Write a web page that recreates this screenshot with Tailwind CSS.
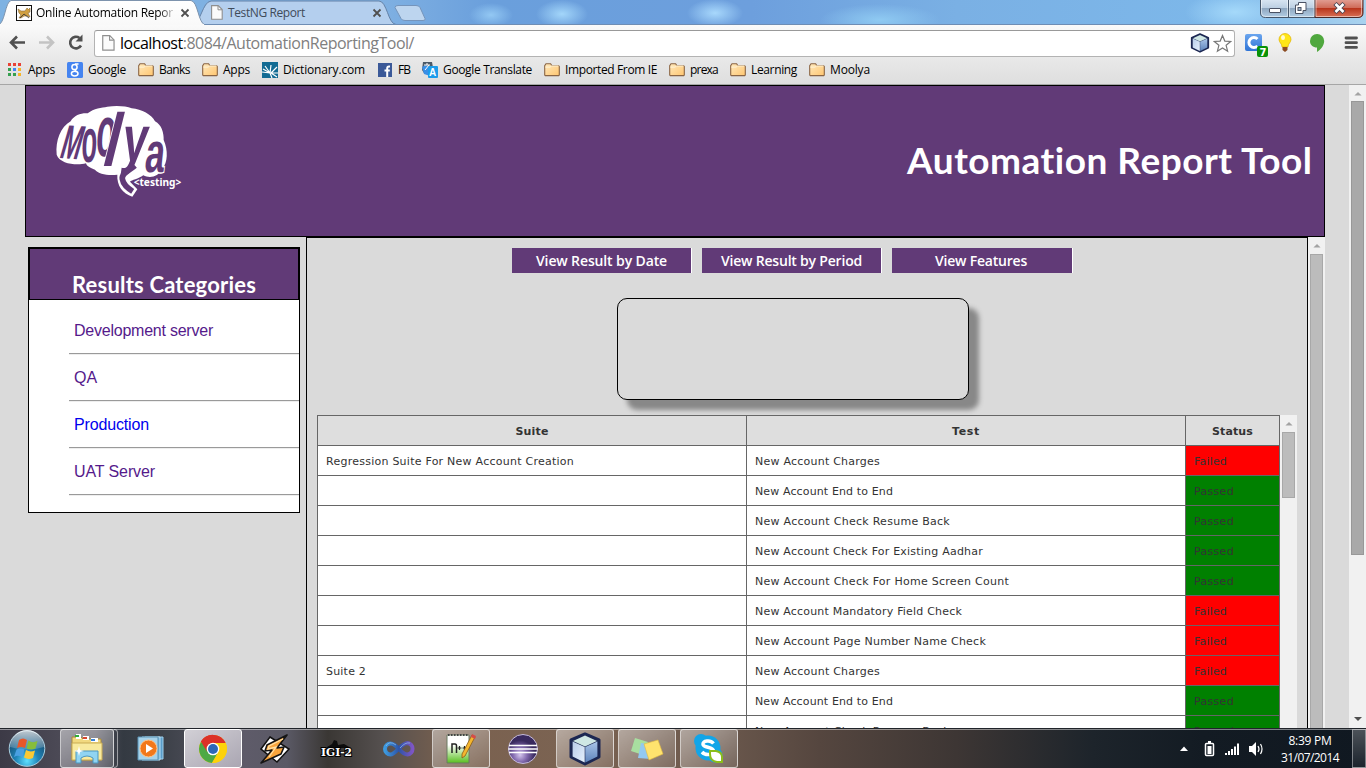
<!DOCTYPE html>
<html lang="en">
<head>
<meta charset="utf-8">
<title>Online Automation Report</title>
<script src="https://cdn.jsdelivr.net/npm/@tailwindcss/browser@4"></script>
</head>
<body class="w-[1366px] h-[768px] overflow-hidden flex flex-col bg-[#dadada] font-['Open_Sans',sans-serif] text-black">

<!-- shared symbols -->
<svg width="0" height="0" class="absolute">
  <defs>
    <linearGradient id="fold" x1="0" y1="0" x2="1" y2="1"><stop offset="0" stop-color="#ffe9bd"/><stop offset="1" stop-color="#ffc670"/></linearGradient>
    <linearGradient id="cubeL" x1="0" y1="0" x2="1" y2="1"><stop offset="0" stop-color="#b9cdea"/><stop offset="1" stop-color="#e6f0fc"/></linearGradient>
    <linearGradient id="cubeR" x1="0" y1="0" x2="0" y2="1"><stop offset="0" stop-color="#a9c4e8"/><stop offset="1" stop-color="#5f85bd"/></linearGradient>
    <symbol id="folder" viewBox="0 0 16 16"><path d="M.7 13V3.6L2 1.7h4.6l1.2 1.8h6.6l.9 1V13l-.6.6H1.3z" fill="url(#fold)" stroke="#8a6544" stroke-width="1.1"/><path d="M1.3 5.1h4.8l1.5-1.2h7" fill="none" stroke="#fff4d8" stroke-width="1"/></symbol>
    <symbol id="page" viewBox="0 0 12 15"><path d="M.6.6h6.6l4 4v9.6H.6z" fill="#fbfbfb" stroke="#8f8f8f" stroke-width="1.1"/><path d="M7 .8v4h4" fill="none" stroke="#8f8f8f"/></symbol>
    <symbol id="cube" viewBox="0 0 32 34"><path d="M16 2 30 8V25L16 32 2 25V8z" fill="#1c2752" stroke="#1c2752" stroke-width="3" stroke-linejoin="round"/><path d="M16 3.5 28 9 16 14.500 4 9z" fill="#cfe7e4"/><path d="M3.600 9.500 15.700 15V30.500L3.600 24.500z" fill="url(#cubeL)"/><path d="M28.400 9.500 16.300 15V30.500L28.400 24.500z" fill="url(#cubeR)"/></symbol>
    <symbol id="up" viewBox="0 0 9 5"><path d="M0 4.500 4.500 0 9 4.500z" fill="#a3a3a3"/></symbol>
  </defs>
</svg>

<!-- tab strip -->
<div class="relative h-[25px] shrink-0 bg-[radial-gradient(ellipse_22px_12px_at_491px_15px,#93c8f3,transparent),radial-gradient(ellipse_26px_14px_at_562px_14px,#a3d6fa,transparent),radial-gradient(ellipse_28px_14px_at_715px_13px,#a8d8fc,transparent),radial-gradient(ellipse_60px_16px_at_880px_20px,#8fcaf2,transparent),radial-gradient(ellipse_50px_20px_at_1235px_12px,#a5d9fa,transparent),linear-gradient(90deg,#7eb2e2,#7fb0e2_28%,#6a9fdc_36%,#6d9fdd_55%,#7ab0e4_70%,#7db8ea_90%,#a9d2ee)]">
  <svg class="absolute inset-0" width="1366" height="25">
    <defs><linearGradient id="t1" x1="0" y1="0" x2="0" y2="1"><stop offset="0" stop-color="#fff"/><stop offset="1" stop-color="#f9f9f9"/></linearGradient></defs>
    <path d="M192 24.500C201 24 202 2 211 1h168c8 0 9 23 17 23.500z" fill="#b4cfee" stroke="#6482a8"/>
    <path d="M395 7.500Q395 5.500 398 5.500h18q3 0 4 2l5 11q1 2-2 2h-18q-3 0-4-2z" fill="#bdd5ef" stroke="#7594bb"/>
    <path d="M0 24.500H1366" stroke="#6e8db4"/>
    <path d="M-2 25C5 24 5 2 11 .5h180c7 1 7 22 14 24.500z" fill="url(#t1)" stroke="#7d93ad"/>
    <path d="M0 24.500h204" stroke="#f9f9f9"/>
    <g stroke="#4f4f4f" stroke-width="1.8"><path d="M181.500 9.500l7 7m0-7l-7 7M373.500 9.500l7 7m0-7l-7 7"/></g>
    <rect x="16.500" y="5.500" width="15" height="15" fill="#fff" stroke="#111"/>
    <path d="M18 9l3 2 4 0 2-3 1.500 1.500L30 8v4l-2 1 2 4-3-1-3 0-3 2h-2l2-3-2-2z" fill="#d1a041" stroke="#8a6a35" stroke-width=".6"/><path d="M20 18l4-4 5 4" fill="none" stroke="#333" stroke-width=".8"/>
  </svg>
  <div class="relative flex items-center h-[25px] pl-9 text-[12px] leading-[25px]">
    <span data-w="137" class="bg-gradient-to-r from-black from-90% to-black/20 bg-clip-text text-transparent">Online Automation Repor</span>
    <svg class="ml-[38px] mr-[5px]" width="12" height="15"><use href="#page"/></svg>
    <span data-w="77" class="text-[#3f4b5a]">TestNG Report</span>
  </div>
  <svg class="absolute left-[1260px] top-0" width="104" height="19">
    <defs><linearGradient id="wb" x1="0" y1="0" x2="0" y2="1"><stop offset="0" stop-color="#dbe7f3"/><stop offset=".48" stop-color="#bccfe2"/><stop offset=".5" stop-color="#8ea6bf"/><stop offset="1" stop-color="#b4cfe6"/></linearGradient>
    <linearGradient id="wr" x1="0" y1="0" x2="0" y2="1"><stop offset="0" stop-color="#e3a297"/><stop offset=".48" stop-color="#cf6b58"/><stop offset=".5" stop-color="#b8341b"/><stop offset="1" stop-color="#d97358"/></linearGradient></defs>
    <path d="M.5-1V13q0 4.500 5 4.500h49.500V-1z" fill="url(#wb)" stroke="#46566a"/><path d="M55-1v18.500h43q5 0 5-4.500V-1z" fill="url(#wr)" stroke="#4a2a2a"/><path d="M28.500 0v17" stroke="#46566a"/>
    <path d="M1.500 0v13q0 3.500 4 3.500h22V0m2 0v16.500h24.500V0m2 0v16.500h41q4.500 0 4.500-3.500V0" fill="none" stroke="#fff" stroke-opacity=".5"/>
    <rect x="9.500" y="8.500" width="11" height="4" rx=".5" fill="#fff" stroke="#4a5264"/>
    <path d="M38.500 2.500h7.500v8h-3v3h-7.500v-8.500h3z" fill="#fff" stroke="#4a5264"/><rect x="38" y="7.500" width="3" height="3" fill="#a0b5ca" stroke="#4a5264"/>
    <path d="M75 3.500l9 9m0-9l-9 9" stroke="#4a4350" stroke-width="4.500"/><path d="M75.500 4l8 8m0-8l-8 8" stroke="#fff" stroke-width="2.600"/>
  </svg>
</div>

<!-- toolbar -->
<div class="h-8 shrink-0 flex items-center bg-gradient-to-b from-[#fafafa] to-[#e9e9e9]">
  <svg class="ml-[9px]" width="82" height="32" fill="none">
    <path d="M16 17.500H3M8 11.500l-6 6 6 6" stroke="#505050" stroke-width="2.600"/>
    <path d="M30 17.500h13M38 11.500l6 6-6 6" stroke="#c3c3c3" stroke-width="2.600"/>
    <path d="M72 20.500A5.800 5.800 0 1 1 70.500 13" stroke="#505050" stroke-width="2.600"/><path d="M73.500 9.500v7h-7z" fill="#505050"/>
  </svg>
  <div class="ml-[3px] mt-1 w-[1141px] h-[27px] rounded-[3px] border border-[#b3b3b3] border-t-[#999] bg-white flex items-center pl-[7px] text-[16px]">
    <svg width="13" height="16"><use href="#page"/></svg>
    <span class="ml-[5px] -mt-px leading-6 text-[#808080]" data-w="294"><span class="text-black">localhost</span>:8084/AutomationReportingTool/</span>
    <svg class="ml-auto" width="20" height="20"><use href="#cube"/></svg>
    <svg class="ml-[3px] mr-[2px]" width="19" height="19" viewBox="0 0 19 19"><path d="M9.500 1.500l2.300 5.600 5.900.4-4.600 3.800 1.500 5.900-5.100-3.300-5.100 3.300 1.500-5.900L1.300 7.500l5.900-.4z" fill="#fff" stroke="#777" stroke-width="1.200"/></svg>
  </div>
  <svg class="ml-2" width="120" height="32">
    <defs><linearGradient id="cc" x1="0" y1="0" x2="0" y2="1"><stop offset="0" stop-color="#6aa5ee"/><stop offset="1" stop-color="#2f74d6"/></linearGradient></defs>
    <rect x="2" y="9" width="17" height="17" rx="2" fill="url(#cc)"/><path d="M14.500 14a5 5 0 1 0 0 7" fill="none" stroke="#fff" stroke-width="3"/>
    <rect x="14" y="21" width="11" height="11" rx="2" fill="#089208"/><text x="16.500" y="30.500" font-size="10" font-weight="700" font-family="DejaVu Sans" fill="#fff">7</text>
    <path d="M42 8.500a6 6 0 0 0-6 6c0 3 3 4 3 7.500h6c0-3.500 3-4.500 3-7.500a6 6 0 0 0-6-6z" fill="#ffe617" stroke="#e0b000" stroke-width=".7"/><path d="M39.500 22h5v3l-2.500 2-2.500-2z" fill="#8b4b22"/><ellipse cx="40" cy="12.500" rx="2" ry="2.500" fill="#fff" opacity=".8"/>
    <path d="M74 9a7 7 0 0 0-7 7c0 4 3 6.500 7 6.500V27c3-2 7.200-6 7.200-11A7 7 0 0 0 74 9z" fill="#50a83f"/>
    <g stroke="#505050" stroke-width="2.800" stroke-linecap="round"><path d="M103 13h10.500M103 17.700h10.500M103 22.400h10.500"/></g>
  </svg>
</div>

<!-- bookmarks bar -->
<div class="h-7 shrink-0 flex items-center gap-3 pl-2 pb-[2px] border-b border-[#a6a6a6] bg-gradient-to-b from-[#e9e9e9] to-[#dedede] text-[12px] leading-6">
  <div class="flex items-center gap-[5px]"><svg width="15" height="14"><g fill="#e94235"><path d="M0 0h3v3H0zM5 0h3v3H5zM10 0h3v3h-3z"/></g><path d="M0 5h3v3H0z" fill="#35a04f"/><path d="M5 5h3v3H5z" fill="#4285f4"/><path d="M10 5h3v3h-3zM10 10h3v3h-3z" fill="#f7b529"/><path d="M0 10h3v3H0zM5 10h3v3H5z" fill="#35a04f"/></svg><span data-w="27">Apps</span></div>
  <div class="flex items-center gap-[5px]"><svg width="16" height="16"><rect width="16" height="16" rx="1.500" fill="#4584f0"/><g fill="none" stroke="#fff" stroke-width="1.500"><circle cx="7.500" cy="5" r="2.600"/><path d="M11.500 2H8M8.500 7.500q-1 1 .8 2"/><ellipse cx="7.700" cy="11.600" rx="3.300" ry="2.400"/></g></svg><span data-w="38">Google</span></div>
  <div class="flex items-center gap-[5px]"><svg width="16" height="16"><use href="#folder"/></svg><span data-w="31">Banks</span></div>
  <div class="flex items-center gap-[5px]"><svg width="16" height="16"><use href="#folder"/></svg><span data-w="27">Apps</span></div>
  <div class="flex items-center gap-[5px]"><svg width="16" height="16"><path d="M0 0h16v16H0z" fill="#126b93"/><path d="M0 10l8 1 2 5M8 11L3 4m5 7l1-8m0 8l6-6m-6 6h7m-7 0l6 4M1 7l7 4" fill="none" stroke="#fff" stroke-width="1.200"/></svg><span data-w="82">Dictionary.com</span></div>
  <div class="flex items-center gap-[5px]"><svg width="16" height="16"><path d="M1 1h14v14H1z" fill="#3b5998"/><path d="M13 4.500h-1q-1.800 0-1.800 2V15M7.500 8.500h5.300" fill="none" stroke="#fff" stroke-width="2"/></svg><span data-w="12">FB</span></div>
  <div class="flex items-center gap-[5px]"><svg width="16" height="16"><path d="M1 0h9l2 11H2L0 8z" fill="#4c5a68"/><path d="M0 5l4-2 4 3v8L2 12z" fill="#3a8fe6"/><rect x="6" y="4" width="10" height="12" rx="1" fill="#1c9ceb"/><path d="M2 3h6M5 1v2M3 8l4-5" stroke="#fff" fill="none"/><text x="7" y="14" font-size="10" font-weight="700" font-family="Liberation Sans" fill="#fff">A</text></svg><span data-w="89">Google Translate</span></div>
  <div class="flex items-center gap-[5px]"><svg width="16" height="16"><use href="#folder"/></svg><span data-w="92">Imported From IE</span></div>
  <div class="flex items-center gap-[5px]"><svg width="16" height="16"><use href="#folder"/></svg><span data-w="28">prexa</span></div>
  <div class="flex items-center gap-[5px]"><svg width="16" height="16"><use href="#folder"/></svg><span data-w="46">Learning</span></div>
  <div class="flex items-center gap-[5px]"><svg width="16" height="16"><use href="#folder"/></svg><span data-w="40">Moolya</span></div>
</div>

<!-- page viewport -->
<div class="flex h-[643px] shrink-0 overflow-hidden">
  <div class="ml-[25px] w-[1300px] flex flex-col">
    <header class="h-[152px] shrink-0 border border-black bg-[#613a77] flex items-center justify-between text-white">
      <svg class="ml-[27px] -mt-[20px] overflow-visible" width="131" height="94" viewBox="99 60 393 282" font-family="Liberation Sans" font-weight="700" font-size="100">
        <path d="M110 212C106 170 122 128 152 112C162 92 188 86 203 88C222 72 245 72 262 68C290 64 318 66 335 73C365 75 395 92 405 112C425 122 432 148 431 168C445 200 443 235 427 255C415 278 390 284 370 274C355 285 335 288 330 293L352 316L337 338C308 328 290 305 292 272C265 276 235 270 225 257C210 252 200 246 198 238C170 245 120 240 110 212Z" fill="#fff"/>
        <g fill="#613a77">
          <text transform="translate(115 222) rotate(4) skewX(-12) scale(.72 1.45)">M</text>
          <text transform="translate(182 233) skewX(-3) scale(.76 1.860)">o</text>
          <text transform="translate(224 216) skewX(-5) scale(.96 2.150)">o</text>
          <text transform="translate(240 246) skewX(-14) scale(1.650 2.250)" stroke="#fff" stroke-width="3" paint-order="stroke">l</text>
          <text transform="translate(301 230) skewX(-8) scale(1.350 1.950)" stroke="#fff" stroke-width="5" paint-order="stroke">y</text>
          <text transform="translate(371 264) skewX(-6) scale(1.050 1.700)" stroke="#fff" stroke-width="5" paint-order="stroke">a</text>
          <path d="M345 245C325 262 304 268 307 285C310 303 322 312 338 322" fill="none" stroke="#613a77" stroke-width="17"/>
        </g>
        <text x="341" y="306" font-size="29" textLength="143" lengthAdjust="spacingAndGlyphs" font-family="Noto Sans" fill="#fff">&lt;testing&gt;</text>
      </svg>
      <h1 class="mr-[11px] -mt-[2px] text-[37px] leading-[46px] font-bold font-['Lato',sans-serif]" data-w="406">Automation Report Tool</h1>
    </header>
    <div class="flex h-[491px]">
      <aside class="ml-[3px] mt-[10px] w-[272px] h-[266px] border border-black bg-white">
        <div class="h-[52px] border border-black bg-[#613a77] text-white flex justify-center items-end">
          <h2 class="text-[22px] leading-[28px] font-bold font-['Lato',sans-serif]" data-w="184">Results Categories</h2>
        </div>
        <nav class="pl-10 pt-2 font-['Liberation_Sans',sans-serif] text-base text-[#551a8b]">
          <div class="h-[47px] border-b border-[#eee]"><a class="h-[46px] flex items-center border-b border-[#9a9a9a] pl-[5px]"><span data-w="139">Development server</span></a></div>
          <div class="h-[47px] border-b border-[#eee]"><a class="h-[46px] flex items-center border-b border-[#9a9a9a] pl-[5px]"><span>QA</span></a></div>
          <div class="h-[47px] border-b border-[#eee]"><a class="h-[46px] flex items-center border-b border-[#9a9a9a] pl-[5px] text-[#0000ee]"><span data-w="75">Production</span></a></div>
          <div class="h-[47px] border-b border-[#eee]"><a class="h-[46px] flex items-center border-b border-[#9a9a9a] pl-[5px]"><span data-w="81">UAT Server</span></a></div>
        </nav>
      </aside>
      <main class="ml-[6px] w-[1002px] border border-b-0 border-black flex flex-col">
        <div class="mt-[10px] ml-[205px] flex gap-[10px] text-white text-[14px] font-semibold leading-[25px]">
          <div class="w-[180px] h-[25px] bg-[#613a77] border-r border-white flex justify-center"><span data-w="131">View Result by Date</span></div>
          <div class="w-[180px] h-[25px] bg-[#613a77] border-r border-white flex justify-center"><span data-w="141">View Result by Period</span></div>
          <div class="w-[181px] h-[25px] bg-[#613a77] border-r border-white flex justify-center pr-[2px]"><span data-w="92">View Features</span></div>
        </div>
        <div class="mt-[25px] ml-[310px] w-[352px] h-[102px] shrink-0 rounded-[10px] border border-black bg-[#dadada] shadow-[10px_10px_5px_#888]"></div>
        <div class="mt-[15px] ml-[10px] flex h-[313px] overflow-hidden">
          <div id="grid" class="w-[963px] border-l border-t border-[#666] font-['DejaVu_Sans',sans-serif] text-[11px] text-[#333]">
            <div class="grid grid-cols-[429px_439px_94px] h-[30px] font-bold leading-[26px] text-center bg-[#dedede]">
              <div class="pt-[3px] border-r border-b border-[#666]"><span data-w="33">Suite</span></div><div class="pt-[3px] border-r border-b border-[#666]"><span data-w="28">Test</span></div><div class="pt-[3px] border-r border-b border-[#666]"><span data-w="41">Status</span></div>
            </div>
          </div>
          <div class="w-[17px] bg-[#f1f1f1] flex flex-col items-center">
            <svg class="mt-[7px]" width="8" height="4"><use href="#up"/></svg>
            <div class="mt-[6px] w-[13px] h-[66px] bg-[#bcbcbc] border border-[#a8a8a8]"></div>
          </div>
        </div>
      </main>
      <div class="w-[17px] bg-[#f1f1f1] flex flex-col items-center">
        <svg class="mt-[7px] shrink-0" width="8" height="4"><use href="#up"/></svg>
        <div class="mt-[6px] w-[13px] h-[500px] shrink-0 bg-[#bcbcbc] border border-[#a8a8a8]"></div>
      </div>
    </div>
  </div>
  <div class="ml-6 w-[17px] bg-[#f1f1f1] flex flex-col items-center">
    <svg class="mt-[7px] shrink-0" width="8" height="4"><use href="#up"/></svg>
    <div class="mt-[5px] w-[13px] h-[454px] shrink-0 bg-[#a9a9a9] border border-[#989898]"></div>
    <svg class="mt-auto mb-[7px]" width="8" height="4"><path d="M0 0h8L4 4z" fill="#505050"/></svg>
  </div>
</div>

<!-- taskbar -->
<div class="h-10 shrink-0 flex border-t border-[#20242a] text-white bg-[linear-gradient(90deg,#3c3a46,#55535f_7%,#343a42_9%,#3d4149_12%,#5e5b69_18%,#5a5965_21%,#3a3734_24%,#55504f_28%,#7a614f_33%,#7b6352_42%,#6d5a4e_52%,#55463f_60%,#3d3634_70%,#1d242b_80%,#131b23_88%,#101821)] shadow-[inset_0_1px_0_rgba(255,255,255,.45)]">
  <svg class="ml-2 mr-[14px]" width="38" height="39" viewBox="0 0 38 39">
    <defs><radialGradient id="orb" cx=".5" cy=".85" r=".8"><stop offset="0" stop-color="#5fe0ff"/><stop offset=".4" stop-color="#1f84b8"/><stop offset="1" stop-color="#16405f"/></radialGradient><linearGradient id="gl" x1="0" y1="0" x2="0" y2="1"><stop offset="0" stop-color="#fff" stop-opacity=".75"/><stop offset="1" stop-color="#fff" stop-opacity=".15"/></linearGradient></defs>
    <circle cx="19" cy="19.500" r="17.800" fill="url(#orb)" stroke="#a9cfe0" stroke-width="1"/><path d="M2 18a17 17 0 0 1 34 0Q19 23 2 18z" fill="url(#gl)"/>
    <path d="M11 11q4-3 8 0l-2 8q-4-2-8 0z" fill="#e8572a"/><path d="M20.500 11.500q4 3 9 .5l-2 7.500q-4 2-9 0z" fill="#86bd3c"/><path d="M8.500 20.500q4-2 8 0l-2 8q-4-3-8.500-.5z" fill="#4aa0e2"/><path d="M18 21q4 2.500 9 .5l-2 7.500q-5 2-9-.5z" fill="#fbc934"/>
  </svg>
  <div class="flex gap-1">
    <div class="w-[58px] flex"><div class="w-[54px] flex items-center justify-center rounded-[3px] border border-white/60 bg-gradient-to-br from-white/50 to-white/15"><svg width="32" height="30" viewBox="0 0 32 30"><path d="M1 6V3h9l2 2h18v21H1z" fill="#f1d97f" stroke="#a8893c"/><path d="M5 0h5v5H5zM12 2h6v4h-6zM20 4h7v4h-7z" fill="#fff"/><path d="M4 1h4v2H4z" fill="#2fae37"/><path d="M12 3h4v2h-4z" fill="#d9472f"/><path d="M20 5h4v2h-4z" fill="#3b84d8"/><path d="M1 9h30v17H1z" fill="#f8ea9e" stroke="#c8ab55"/><path d="M5 29V17h22v12h-5v-5q-6-4-12 0v5z" fill="#90d4f2" stroke="#4a96c0"/><path d="M8 12l1 4 4 1-4 1-1 4-1-4-4-1 4-1z" fill="#fff"/></svg></div><div class="w-1 border-r border-y border-white/50 rounded-r"></div></div>
    <div class="w-[58px] flex items-center justify-center"><svg width="28" height="26" viewBox="0 0 28 26"><path d="M8 1h18v22H8z" fill="#5a9cc8" stroke="#9fd0ec"/><path d="M5 1h18v23H5z" fill="#71b2da" stroke="#b9def3"/><path d="M1 1h20v23H1z" fill="#a7d2ea" stroke="#5b93b5"/><circle cx="11.500" cy="12.500" r="8.500" fill="#f2781b" stroke="#ffc58a"/><path d="M9 8l7 4.500L9 17z" fill="#fff"/></svg></div>
    <div class="w-[58px] flex items-center justify-center rounded-[3px] border border-white bg-gradient-to-br from-[#d2d0d6] to-[#aaa6b2]"><svg width="30" height="30" viewBox="0 0 30 30"><circle cx="15" cy="15" r="14" fill="#fdd20a"/><path d="M15 15L3 7.500A14 14 0 0 1 27.500 9H15z" fill="#dc3127"/><path d="M2.900 8A14 14 0 0 0 14 29l6-10.500L15 15z" fill="#4da944"/><path d="M15 9h12.500A14 14 0 0 1 14 29l6-10z" fill="#fdd20a"/><path d="M2.900 7.500A14 14 0 0 1 27.500 9H15a6.500 6.500 0 0 0-5.800 9z" fill="#dc3127"/><circle cx="15" cy="15" r="6.300" fill="#fff"/><circle cx="15" cy="15" r="5" fill="#2c68b8"/></svg></div>
    <div class="w-[58px] flex items-center justify-center"><svg width="30" height="30" viewBox="0 0 30 30"><path d="M10 3l19 12-12 13L1 15z" fill="#fff" stroke="#111" stroke-width="1.500"/><path d="M27 1L7 11l-2 6 7-1L1 29l20-9 3-7-7 1z" fill="#f9a53c" stroke="#151515" stroke-width="1.600" stroke-linejoin="round"/><path d="M23 5L9 12l-1 3 8-2-7 10" fill="none" stroke="#ffe0a5" stroke-width="1.300"/></svg></div>
    <div class="w-[58px] flex items-center justify-center"><svg width="34" height="20" viewBox="0 0 34 20"><path d="M7 8l5-3 2-4 3 1 1 4 6-1 7 4H7z" fill="#0c0c0c"/><text x="1" y="17" font-size="11" font-weight="700" font-family="DejaVu Serif" textLength="31" lengthAdjust="spacingAndGlyphs" fill="#fff" stroke="#000" stroke-width="2" paint-order="stroke">IGI-2</text></svg></div>
    <div class="w-[58px] flex items-center justify-center"><svg width="32" height="20" viewBox="0 0 32 20"><defs><linearGradient id="vs"><stop offset="0" stop-color="#3d9ae0"/><stop offset=".5" stop-color="#2d55a8"/><stop offset="1" stop-color="#7d55c4"/></linearGradient></defs><path d="M16 10C12.500 6 10 4.500 7.500 4.500a5.500 5.500 0 0 0 0 11C13 15.500 18 4 24.500 4a5.800 5.800 0 0 1 0 11.500C21.500 15.500 19 13.500 16 10z" fill="none" stroke="url(#vs)" stroke-width="4"/><path d="M13 6Q6 1 3 7m14 2q5-6 10-5" fill="none" stroke="#9fd0f5" stroke-opacity=".6"/></svg></div>
    <div class="w-[58px] flex items-center justify-center rounded-[3px] border border-white/60 bg-gradient-to-br from-white/45 to-white/10"><svg width="30" height="32" viewBox="0 0 30 32"><defs><linearGradient id="np" x1="0" y1="0" x2="0" y2="1"><stop offset=".35" stop-color="#fff"/><stop offset="1" stop-color="#58c01e"/></linearGradient></defs><path d="M1 2h22v28H1z" fill="url(#np)" stroke="#6a7a63"/><path d="M2 2h20" stroke="#444" stroke-width="2" stroke-dasharray="1.500 1.500"/><path d="M6 20v-9h3q1.500 0 1.500 2v7" fill="none" stroke="#222" stroke-width="1.500"/><path d="M11.500 15h4m-2-2v4M16.500 15h4m-2-2v4" stroke="#222" stroke-width="1.200"/><path d="M26 2l3 2-10 19-3 2 0-4z" fill="#f4b62e" stroke="#8a5a18" stroke-width=".8"/><path d="M26 1l4 2-1 3-4-2z" fill="#d64c48"/></svg></div>
    <div class="w-[58px] flex items-center justify-center"><svg width="32" height="32" viewBox="0 0 32 32"><defs><radialGradient id="ec" cx=".4" cy=".7"><stop offset="0" stop-color="#d5c6ee"/><stop offset=".5" stop-color="#8168ad"/><stop offset="1" stop-color="#392a5e"/></radialGradient></defs><circle cx="16" cy="16" r="14.500" fill="url(#ec)" stroke="#c7bcdc"/><path d="M2 12.500h28M1.500 16h29M2 19.500h28" stroke="#fff" stroke-width="1.700"/></svg></div>
    <div class="w-[58px] flex items-center justify-center rounded-[3px] border border-white/60 bg-gradient-to-br from-white/45 to-white/10"><svg width="32" height="34"><use href="#cube"/></svg></div>
    <div class="w-[58px] flex items-center justify-center rounded-[3px] border border-white/60 bg-gradient-to-br from-white/45 to-white/10"><svg width="34" height="28" viewBox="0 0 34 28"><path d="M5 3l13 4-5 13L1 16z" fill="#a8dfa0"/><path d="M11 8l12 2-2 14-13-1z" fill="#93c9f0"/><path d="M14 9l14-4 5 14-14 6z" fill="#ffe36e" stroke="#e0b840" stroke-width=".6"/></svg></div>
    <div class="w-[58px] flex items-center justify-center rounded-[3px] border border-white/60 bg-gradient-to-br from-white/45 to-white/10"><svg width="32" height="32" viewBox="0 0 32 32"><circle cx="15" cy="15" r="12.500" fill="#12a5e8"/><circle cx="8" cy="8" r="7" fill="#12a5e8"/><circle cx="22" cy="22" r="7.500" fill="#12a5e8"/><path d="M20.500 10.500Q18 7.500 14 8q-4.500.7-4 3.500c.5 3.500 10.500 2 10.500 6.500 0 4-8 5-11.500 1" fill="none" stroke="#fff" stroke-width="3.500"/><path d="M17 18h6q6 1 6 6v5h-5q-7-1-7-8z" fill="#fff" stroke="#8bbd1b" stroke-width="2"/></svg></div>
  </div>
  <div class="ml-auto flex items-center">
    <svg width="90" height="39" viewBox="0 0 90 39"><path d="M2 22l4-4.500 4 4.500z" fill="#fff"/><rect x="27.500" y="14.500" width="8" height="12" rx="1" fill="none" stroke="#fff" stroke-width="1.500"/><path d="M30 12h3v2h-3zM29.500 17h4v8h-4z" fill="#fff"/><path d="M47 24h2v2h-2zM50 22h2v4h-2zM53 20h2v6h-2zM56 17.500h2V26h-2zM59 14.500h2V26h-2z" fill="#fff"/><path d="M71 17h3l4-4v14l-4-4h-3z" fill="#fff"/><path d="M80 17q2 3 0 6M82.500 15q3 5 0 10" fill="none" stroke="#fff" stroke-width="1.200"/></svg>
    <div class="ml-[12px] mr-[12px] w-[60px] flex flex-col items-center text-[12px] leading-[17px]"><span data-w="43">8:39 PM</span><span data-w="58">31/07/2014</span></div>
    <div class="w-[14px] h-[39px] border border-white/40 bg-gradient-to-b from-white/25 to-white/5"></div>
  </div>
</div>

<script>
const rows = [
  ['Regression Suite For New Account Creation', 'New Account Charges', 0],
  ['', 'New Account End to End', 1],
  ['', 'New Account Check Resume Back', 1],
  ['', 'New Account Check For Existing Aadhar', 1],
  ['', 'New Account Check For Home Screen Count', 1],
  ['', 'New Account Mandatory Field Check', 0],
  ['', 'New Account Page Number Name Check', 0],
  ['Suite 2', 'New Account Charges', 0],
  ['', 'New Account End to End', 1],
  ['', 'New Account Check Resume Back', 1]
];
const widths = {
  'Regression Suite For New Account Creation': 248, 'New Account Charges': 125, 'New Account End to End': 138,
  'New Account Check Resume Back': 195, 'New Account Check For Existing Aadhar': 228,
  'New Account Check For Home Screen Count': 254, 'New Account Mandatory Field Check': 207,
  'New Account Page Number Name Check': 231, 'Suite 2': 40
};
const span = t => t ? `<span data-w="${widths[t]}">${t}</span>` : '';
document.getElementById('grid').insertAdjacentHTML('beforeend', rows.map(([s, t, ok]) =>
  `<div class="grid grid-cols-[429px_439px_94px] h-[30px] leading-[26px] bg-white">
    <div class="border-r border-b border-[#666] pl-2 pt-[3px]">${span(s)}</div>
    <div class="border-r border-b border-[#666] pl-2 pt-[3px]">${span(t)}</div>
    <div class="border-r border-b border-[#666] pl-2 pt-[3px] ${ok ? 'bg-[#008000]' : 'bg-[#ff0000]'}"><span data-w="${ok ? 40 : 33}">${ok ? 'Passed' : 'Failed'}</span></div>
  </div>`).join(''));

// Spread each label's letters so that it fills its nominal width.
const labels = [...document.querySelectorAll('[data-w]')];
function fit() {
  for (const el of labels) {
    el.style.cssText = 'display:inline-block;white-space:nowrap;flex:none;letter-spacing:0;width:auto';
  }
  const natural = labels.map(el => el.getBoundingClientRect().width);
  labels.forEach((el, i) => {
    const w = +el.dataset.w;
    el.style.letterSpacing = (w - natural[i]) / el.textContent.length + 'px';
    el.style.width = w + 'px';
  });
}
// Refit while styles and fonts are still settling.
fit();
document.fonts.ready.then(fit);
addEventListener('load', fit);
let frames = 0;
(function again() { fit(); if (++frames < 40) requestAnimationFrame(again); })();
for (const ms of [20, 60, 150, 300, 600]) setTimeout(fit, ms);
</script>
</body>
</html>
